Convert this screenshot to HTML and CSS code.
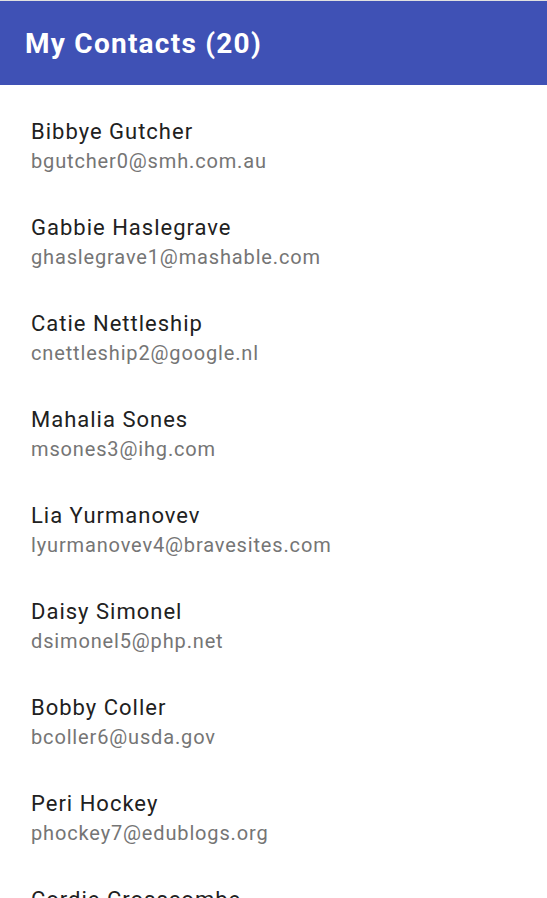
FILE: index.html
```html
<!DOCTYPE html>
<html>
<head>
<meta charset="utf-8">
<link rel="stylesheet" href="styles.css">
</head>
<body>
<div class="app">
  <header class="header"><h1 class="title">My Contacts (20)</h1></header>
  <ul class="list">
    <li class="item"><div class="name">Bibbye Gutcher</div><div class="email">bgutcher0@smh.com.au</div></li>
    <li class="item"><div class="name">Gabbie Haslegrave</div><div class="email">ghaslegrave1@mashable.com</div></li>
    <li class="item"><div class="name">Catie Nettleship</div><div class="email">cnettleship2@google.nl</div></li>
    <li class="item"><div class="name">Mahalia Sones</div><div class="email">msones3@ihg.com</div></li>
    <li class="item"><div class="name">Lia Yurmanovev</div><div class="email">lyurmanovev4@bravesites.com</div></li>
    <li class="item"><div class="name">Daisy Simonel</div><div class="email">dsimonel5@php.net</div></li>
    <li class="item"><div class="name">Bobby Coller</div><div class="email">bcoller6@usda.gov</div></li>
    <li class="item"><div class="name">Peri Hockey</div><div class="email">phockey7@edublogs.org</div></li>
    <li class="item"><div class="name">Cordie Crosscombe</div><div class="email">ccrosscombe8@example.com</div></li>
  </ul>
</div>
</body>
</html>
```

FILE: styles.css
```css
html, body {
  margin: 0;
  padding: 0;
  background: #ffffff;
}
body {
  font-family: Roboto, "Liberation Sans", sans-serif;
  border-top: 1px solid #e0e0e0;
}
.header {
  background: #3f51b5;
  height: 84px;
  display: flex;
  align-items: center;
  padding-left: 25px;
}
.title {
  margin: 0;
  color: #ffffff;
  font-size: 28px;
  font-weight: 700;
  letter-spacing: 1.25px;
}
.list {
  list-style: none;
  margin: 0;
  padding: 0;
}
.item {
  height: 96px;
  box-sizing: border-box;
  padding: 33px 31px 0;
}
.name {
  font-size: 22px;
  line-height: 28px;
  letter-spacing: 1px;
  color: #212121;
}
.email {
  margin-top: 1px;
  font-size: 20px;
  line-height: 29px;
  letter-spacing: 0.85px;
  color: #757575;
}
```
